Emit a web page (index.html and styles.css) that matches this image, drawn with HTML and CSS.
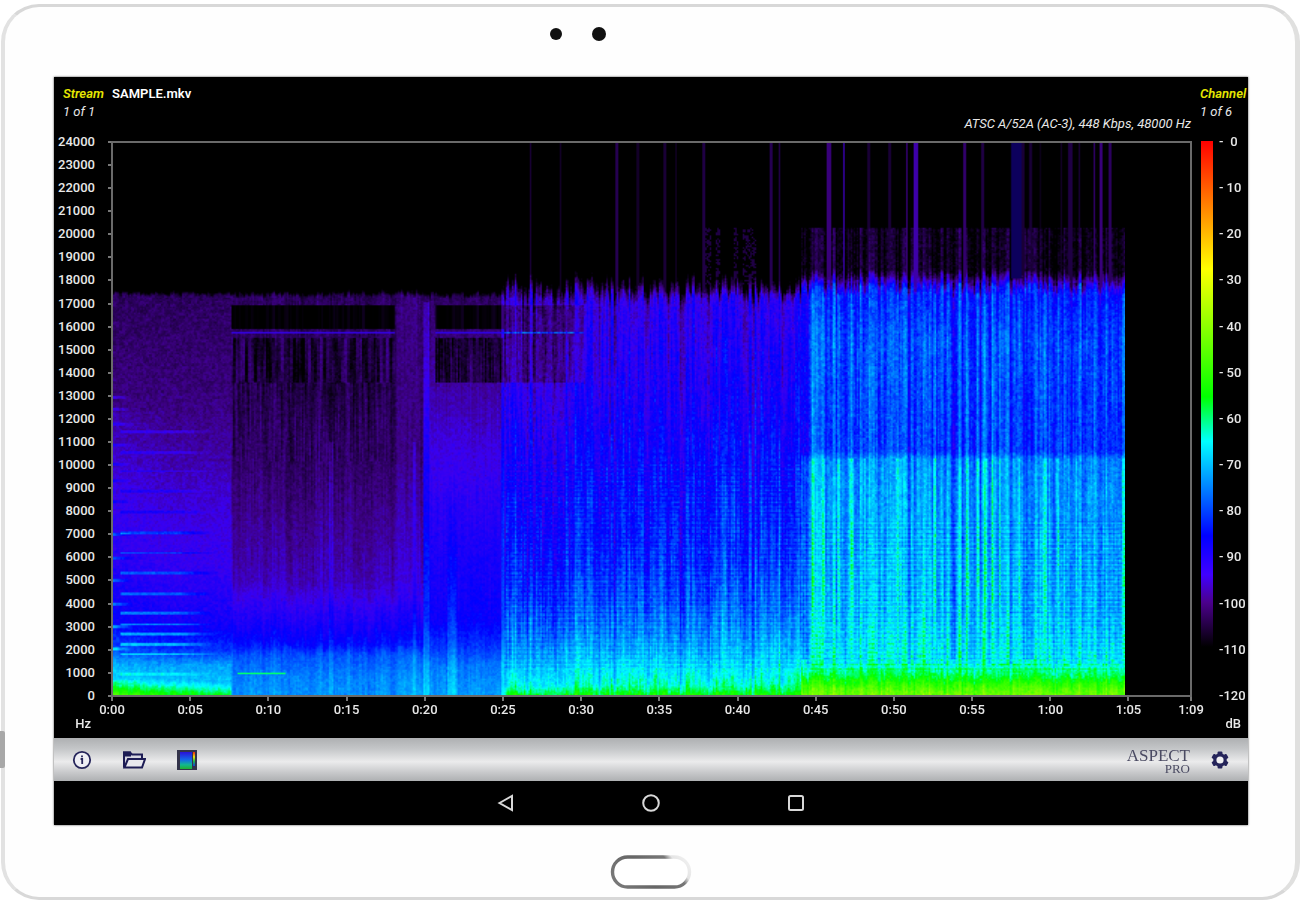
FILE: index.html
```html
<!DOCTYPE html>
<html lang="en">
<head>
  <meta charset="UTF-8" />
  <meta name="viewport" content="width=device-width, initial-scale=1.0"/>
  <title>Aspect Pro</title>
  <link rel="stylesheet" href="styles.css">
</head>
<body>
  <div class="side-button"></div>
  <div class="tablet">
    <div class="cameras">
      <span class="camera camera-small"></span>
      <span class="camera"></span>
    </div>

    <main class="screen">
      <section class="chart">
        <header class="chart-header">
          <div class="stream">
            <p><button class="label-btn">Stream</button> <span class="file-name">SAMPLE.mkv</span></p>
            <p class="count">1 of 1</p>
          </div>
          <p class="format">ATSC A/52A (AC-3), 448 Kbps, 48000 Hz</p>
          <div class="channel">
            <button class="label-btn">Channel</button>
            <p class="count">1 of 6</p>
          </div>
        </header>

        <ul class="freq-axis" id="freqAxis"></ul>
        <div class="plot">
          <canvas id="spectrogram" width="675" height="371"></canvas>
        </div>
        <div class="level-axis">
          <div class="level-bar"></div>
          <ul class="levels" id="levels"></ul>
        </div>

        <div class="unit">Hz</div>
        <ul class="time-axis" id="timeAxis"></ul>
        <div class="unit unit-db">dB</div>
      </section>

      <div class="toolbar">
        <button class="tool" aria-label="Info">
          <svg width="20" height="20" viewBox="0 0 20 20" fill="none" stroke="#25245a" stroke-width="1.8">
            <circle cx="10" cy="10" r="8.2" fill="#eeeef4"/>
            <path d="M8.6 9h1.6v5M10 5.4v1.8"/>
          </svg>
        </button>
        <button class="tool" aria-label="Open file">
          <svg width="24" height="20" viewBox="0 0 24 20" fill="none" stroke="#1d1c55" stroke-width="2">
            <path d="M2 17.5V2.5h6l2 2h10v4" fill="#d6d6e0"/>
            <path d="M2 2.5h6v3H2z" fill="#1d1c55"/>
            <path d="M2.4 17.5l3.6-8.5h17l-3 8.5z" fill="#e8e8ee"/>
          </svg>
        </button>
        <button class="tool" aria-label="Spectrogram">
          <svg width="22" height="22" viewBox="0 0 22 22">
            <defs>
              <linearGradient id="specIcon" x1="0" y1="0" x2="0" y2="1">
                <stop offset="0" stop-color="#2a10d8"/>
                <stop offset=".45" stop-color="#1466e8"/>
                <stop offset=".75" stop-color="#12b890"/>
                <stop offset="1" stop-color="#20b030"/>
              </linearGradient>
              <linearGradient id="barIcon" x1="0" y1="0" x2="0" y2="1">
                <stop offset="0" stop-color="#f02010"/>
                <stop offset=".35" stop-color="#f0e010"/>
                <stop offset=".65" stop-color="#20c040"/>
                <stop offset="1" stop-color="#1040e0"/>
              </linearGradient>
            </defs>
            <rect x="1" y="1" width="20" height="20" fill="#33334a"/>
            <rect x="4" y="3" width="12" height="17" fill="url(#specIcon)"/>
            <rect x="17" y="3" width="2" height="14" fill="url(#barIcon)"/>
          </svg>
        </button>
        <div class="brand">ASPECT<span>PRO</span></div>
        <button class="tool" aria-label="Settings">
          <svg width="20" height="20" viewBox="0 0 20 20">
            <g fill="#25245a">
              <rect x="7.6" y="1.4" width="4.8" height="17.2" rx="1"/>
              <rect x="7.6" y="1.4" width="4.8" height="17.2" rx="1" transform="rotate(60 10 10)"/>
              <rect x="7.6" y="1.4" width="4.8" height="17.2" rx="1" transform="rotate(120 10 10)"/>
              <circle cx="10" cy="10" r="6.8"/>
            </g>
            <circle cx="10" cy="10" r="3.6" fill="#f0f0f2"/>
          </svg>
        </button>
      </div>

      <nav class="nav">
        <button aria-label="Back">
          <svg width="20" height="20" viewBox="0 0 20 20"><path d="M3.5 10l12.500-7v14z"/></svg>
        </button>
        <button aria-label="Home">
          <svg width="20" height="20" viewBox="0 0 20 20"><circle cx="10" cy="10" r="7.800"/></svg>
        </button>
        <button aria-label="Recent apps">
          <svg width="20" height="20" viewBox="0 0 20 20"><rect x="3" y="3" width="14" height="14" rx="1.500"/></svg>
        </button>
      </nav>
    </main>

    <div class="home">
      <svg width="82" height="36" viewBox="0 0 82 36">
        <defs>
          <linearGradient id="homeEdge" x1="0" y1=".6" x2="1" y2=".3">
            <stop offset="0" stop-color="#777"/>
            <stop offset=".4" stop-color="#666"/>
            <stop offset=".78" stop-color="#777"/>
            <stop offset=".87" stop-color="#e4e4e4"/>
            <stop offset="1" stop-color="#eee"/>
          </linearGradient>
        </defs>
        <rect x="2.500" y="3" width="77" height="30" rx="15" fill="#fff" stroke="url(#homeEdge)" stroke-width="3.400"/>
      </svg>
    </div>
  </div>

  <script src="script.js"></script>
</body>
</html>
```

FILE: styles.css
```css
* {
  margin: 0;
  padding: 0;
  box-sizing: border-box;
  font-family: Roboto, 'Liberation Sans', sans-serif;
}

body {
  position: relative;
  min-height: 100vh;
  display: flex;
  background-color: #fff;
  color: #e8e8e8;
  font-size: 13px;
  line-height: 18px;
}

ul {
  list-style: none;
}

button {
  background: none;
  border: none;
  cursor: pointer;
}

.side-button {
  position: absolute;
  left: 0;
  top: 731px;
  width: 5px;
  height: 37px;
  background-color: #a8a8a8;
  border-radius: 0 2px 2px 0;
}

.tablet {
  flex: 1;
  display: flex;
  flex-direction: column;
  margin: 4px 2px 0 1px;
  padding: 0 47px 0 49px;
  background-color: #fefefe;
  border: 3px solid #d8d8d8;
  border-left: 4px solid #e2e2e2;
  border-right: 5px solid #e0e0df;
  border-radius: 38px;
}

.cameras {
  display: flex;
  justify-content: center;
  align-items: flex-start;
  gap: 30px;
  height: 70px;
  padding: 20px 147px 0 0;
}

.camera {
  width: 14px;
  height: 14px;
  border-radius: 50%;
  background-color: #111;
}

.camera-small {
  width: 12px;
  height: 12px;
  margin-top: 1px;
}

.screen {
  flex: 1;
  display: flex;
  flex-direction: column;
  background-color: #000;
  box-shadow: 0 0 2px #444;
}

.chart {
  flex: 1;
  display: grid;
  grid-template-columns: 57px 1fr 56px;
  grid-template-rows: 64px minmax(400px, 1fr) 41px;
}

.chart-header {
  grid-column: 1 / -1;
  display: flex;
  padding: 8px 0 0 9px;
}

.label-btn {
  margin-right: 5px;
  color: #e6e600;
  font-size: 13px;
  font-style: italic;
  font-weight: 600;
  line-height: 18px;
}

.file-name {
  color: #fff;
  font-weight: 600;
}

.count, .format {
  font-style: italic;
}

.format {
  margin-left: auto;
  padding-top: 30px;
}

.channel {
  width: 48px;
  margin-left: 9px;
}

.channel .label-btn {
  margin: 0;
}

.freq-axis, .levels {
  display: flex;
  flex-direction: column;
  justify-content: space-between;
  margin: -7px 0;
  font-weight: 500;
  line-height: 16px;
}

.freq-axis li {
  display: flex;
  justify-content: flex-end;
  align-items: center;
  gap: 13px;
}

.freq-axis li::after {
  content: "";
  width: 3px;
  height: 2px;
  background-color: #777;
}

.plot {
  border: 2px solid #6a6a6a;
}

.plot canvas {
  display: block;
  width: 94%;
  height: 0;
  min-height: 100%;
}

.level-axis {
  display: flex;
  padding-left: 9px;
}

.level-bar {
  width: 12px;
  margin-right: 6px;
  background: linear-gradient(#f00, #ff0 23%, #0f0 46%, #0ff 54%, #00f 71%, #4000ff 78%, #4b008c 83%, #000 91%);
}

.levels li {
  display: flex;
}

.levels span {
  width: 21px;
  text-align: center;
}

.time-axis {
  display: grid;
  grid-template-columns: repeat(13, minmax(0, 5fr)) minmax(0, 4fr) 0;
  padding: 0 1px;
  font-weight: 500;
  line-height: 18px;
}

.time-axis li {
  display: flex;
  flex-direction: column;
  align-items: center;
  width: 0;
}

.time-axis li::before {
  content: "";
  width: 2px;
  height: 4px;
  background-color: #777;
}

.unit {
  padding: 18px 20px 0 0;
  font-weight: 500;
  text-align: right;
}

.unit-db {
  padding-right: 7px;
}

.toolbar {
  display: flex;
  align-items: center;
  gap: 30px;
  height: 43px;
  padding: 0 18px;
  background: linear-gradient(#aeb0b2, #c4c6c8 25%, #ebebec 55%, #c8c9cb 80%, #aeb0b2);
}

.tool {
  display: flex;
}

.brand {
  margin-left: auto;
  margin-right: -10px;
  padding-top: 4px;
  color: #4a4a62;
  font-family: 'Liberation Serif', serif;
  font-size: 17px;
  line-height: 14px;
}

.brand span {
  display: block;
  font-family: inherit;
  font-size: 13px;
  line-height: 12px;
  text-align: right;
}

.nav {
  display: flex;
  justify-content: center;
  align-items: center;
  gap: 125px;
  height: 44px;
}

.nav button {
  display: flex;
}

.nav svg {
  fill: none;
  stroke: #d8d8d8;
  stroke-width: 2;
}

.home {
  display: flex;
  justify-content: center;
  height: 72px;
  padding-top: 29px;
}
```

FILE: script.js
```js
// axis labels
const freqAxis = document.getElementById('freqAxis');
for (let hz = 24000; hz >= 0; hz -= 1000) {
  freqAxis.innerHTML += `<li>${hz}</li>`;
}

const levels = document.getElementById('levels');
for (let db = 0; db <= 120; db += 10) {
  levels.innerHTML += `<li>-<span>${db}</span></li>`;
}

const timeAxis = document.getElementById('timeAxis');
const times = [];
for (let s = 0; s <= 65; s += 5) times.push(s);
times.push(69);
times.forEach(s => {
  timeAxis.innerHTML += `<li>${Math.floor(s / 60)}:${String(s % 60).padStart(2, '0')}</li>`;
});

// level -> color, same scale as the bar on the right
const colors = [
  [-120, 0, 0, 0], [-110, 0, 0, 0], [-100, 62, 0, 135], [-94, 60, 0, 240], [-86, 0, 0, 255],
  [-65, 0, 255, 255], [-56, 0, 255, 0], [-28, 255, 255, 0], [0, 255, 0, 0]
];

function colorFor(db) {
  db = Math.max(-120, Math.min(0, db));
  let i = 1;
  while (db > colors[i][0]) i++;
  const a = colors[i - 1], b = colors[i];
  const t = (db - a[0]) / (b[0] - a[0]);
  return [1, 2, 3].map(k => a[k] + (b[k] - a[k]) * t);
}

// repeatable noise, -1 to 1
function hash(x, y) {
  let h = Math.imul(x | 0, 374761393) + Math.imul(y | 0, 668265263);
  h = Math.imul(h ^ (h >>> 13), 1274126177);
  return ((h ^ (h >>> 16)) >>> 0) / 2147483648 - 1;
}

// noise stretched along y
function streak(x, y, size) {
  const n = Math.floor(y / size), t = y / size - n;
  return hash(x, n) * (1 - t) + hash(x, n + 1) * t;
}

function curve(points, y) {
  let i = 1;
  while (i < points.length - 1 && y > points[i][0]) i++;
  const a = points[i - 1], b = points[i];
  const t = Math.max(0, Math.min(1, (y - a[0]) / (b[0] - a[0])));
  return a[1] + (b[1] - a[1]) * t;
}

// [y, dB] on a 1012 x 556 grid
const parts = {
  intro: [[146, -118], [153, -103], [250, -101], [300, -99], [350, -96], [420, -93], [480, -89], [510, -82], [525, -73], [540, -70], [546, -64], [556, -53]],
  quiet: [[146, -118], [154, -103], [240, -103], [310, -103], [350, -101], [440, -97], [485, -89], [505, -85], [516, -79], [540, -75], [556, -74]],
  rise: [[146, -118], [154, -103], [240, -99], [300, -95], [400, -90], [480, -87], [510, -81], [525, -76], [556, -73]],
  middle: [[132, -120], [150, -102], [158, -95], [240, -92], [320, -88], [400, -85], [460, -81], [500, -75], [525, -70], [545, -65], [556, -56]],
  loud: [[126, -112], [138, -99], [150, -84], [200, -80], [310, -82], [318, -75], [400, -73], [470, -71], [520, -66], [535, -59], [550, -47], [556, -44]]
};

const harmonics = [290, 311, 330, 350, 371, 392, 412, 432, 453, 473, 484, 494, 504, 514, 534];
const attacks = [255, 268, 282, 303, 323, 340, 360, 394, 417, 440, 464, 486, 509];

// full height lines: x, width, dB
const clicks = [
  [417, 2, -106], [447, 2, -107], [503, 2, -104], [524, 2, -107], [551, 2, -106], [562, 2, -107], [590, 2, -105],
  [657, 3, -104], [666, 2, -105], [715, 4, -101], [730, 2, -97], [755, 2, -106], [776, 3, -106], [793, 2, -101],
  [802, 4, -98], [851, 3, -102], [869, 2, -105], [909, 3, -106], [917, 2, -106], [927, 2, -108], [948, 2, -107],
  [957, 4, -105], [966, 2, -106], [981, 2, -102], [987, 3, -101], [996, 3, -103]
];
const bright = [[699, 3], [710, 3], [725, 2], [738, 4], [751, 2], [785, 5], [821, 4], [854, 3], [865, 3], [872, 2], [879, 2], [886, 2], [906, 2], [931, 4], [944, 3], [963, 2], [1010, 4]];

function near(list, x) {
  return list.find(c => Math.abs(x - c[0]) <= c[1] / 2);
}

function levelAt(x, y, cx, cy) {
  const grain = hash(cx, cy + 900) * 0.6 + hash(cx >> 1, (cy >> 1) + 3000) * 0.6;
  const col = hash(cx, 7777) * 0.5 + hash(cx >> 1, 6666) * 0.7;
  const wide = hash(Math.floor(cx / 5), 4444);
  let db;

  if (x < 118) {
    db = curve(parts.intro, y + col * 2) + grain * 2.4;
    if (x < 60 && y > 270) db += (60 - x) / 30;
    if (y > 540) db += (60 - x) / 20;
    harmonics.forEach(h => {
      const d = Math.abs(y - h);
      if (d < 1.2 && x > 6 && x < 104) {
        db += Math.min(1, (104 - x) / 40) * (h > 380 && h < 530 ? 12 : 5);
      }
    });
    attacks.forEach(a => {
      if (Math.abs(y - a) < 1.5 && x < 20) db += (20 - x) / (a < 380 ? 3 : 1.6);
    });
  } else if (x < 310) {
    db = curve(parts.quiet, y + col * 3) + grain * 2 + streak(cx, y, 70) * 1.6 + wide * 1.2;
    if (x > 281) db += y < 450 ? 2 : 1;
    else {
      if (y > 163 && y < 186) db = -110 + col * 2;
      if (y > 195 && y < 241) db += streak(Math.floor(cx / 2), y, 45) * 6 - 3;
      if (y >= 241 && y < 320) db += streak(cx, y, 35) * 2.5 - Math.max(0, (300 - y) / 30);
      if (Math.abs(y - 190.5) < 1) db = -93;
      if (Math.abs(y - 534) < 1 && x > 124 && x < 172) db = -60;
    }
    if (((x > 299 && x < 302) || (x > 215 && x < 219)) && y > 300) db += 4;
  } else if (x < 391) {
    db = curve(parts.rise, y + col * 3) + grain * 2 + streak(cx, y, 90) * 1.4;
    if (x < 316 && y > 160) db += 5;
    if (x > 333 && x < 343 && y > 330) db += Math.min(5, (y - 330) / 30);
    if (x > 322) {
      if (y > 163 && y < 186) db = -109 + col * 2;
      if (y > 195 && y < 241) db += streak(cx, y, 45) * 5 - 6;
      if (Math.abs(y - 190.5) < 1) db = -92;
    }
    if (x > 388 && y > 140) db += 8;
  } else if (x < 688) {
    const grow = (x - 391) / 297;
    const swing = y > 500 ? 3 : 5;
    db = curve(parts.middle, y + (y < 170 ? col * 9 : 0)) + (y > 150 ? grow * 4 - 1 : 0);
    db += grain * 3 + col * swing + wide * 2;
    if (y > 150) db += streak(cx, y, 30) * 3;
    if (x < 470 && y > 163 && y < 241) db -= 5;
    if (y > 320 && y < 530) db += Math.sin(y * 1.5) * 1.8;
    if (Math.abs(y - 190.5) < 1 && x < 470) db = -80 + grain * 8;
    if (y < 142 && y > 84 && x > 590 && hash(Math.floor(cx / 3), 55) > 0.6 && grain > 0.1) db = Math.max(db, -105);
  } else {
    db = curve(parts.loud, y + (y < 165 ? col * 9 : 0));
    db += grain * 3.5 + wide * 2;
    if (y > 140) db += col * (y > 525 ? 2.5 : 5) + streak(cx, y, 50) * 2.5;
    if (y > 380 && y < 530) db += Math.sin(y * 1.5) * 2.5;
    if (near(bright, x) && y > 150 && y < 530) db += (y > 317 ? 9 : 4) * Math.min(1, (530 - y) / 90);
    if ((x < 693 || (x > 838 && x < 843) || (x > 909 && x < 922)) && y > 150 && y < 520) db -= 5;
    if (y > 84 && y < 140) db = Math.max(db, -108 + col * 4 + wide * 2 + grain * 2.5);
    if (x > 897 && x < 908 && y < 136) return -1;
  }

  if (y <= 84 || (x < 590 && y < 126)) db = -120;
  const click = near(clicks, x);
  if (click && y < 150) db = Math.max(db, click[2]);
  return db;
}

function drawSpectrogram() {
  const canvas = document.getElementById('spectrogram');
  const ctx = canvas.getContext('2d');
  const w = canvas.width, h = canvas.height;
  const image = ctx.createImageData(w, h);

  for (let cy = 0; cy < h; cy++) {
    for (let cx = 0; cx < w; cx++) {
      const db = levelAt(cx * 1012 / w, cy * 556 / h, cx, cy);
      // -1 marks the dark blue block before 1:00
      const rgb = db === -1 ? [12, 0, 92] : colorFor(db);
      const i = (cy * w + cx) * 4;
      image.data[i] = rgb[0];
      image.data[i + 1] = rgb[1];
      image.data[i + 2] = rgb[2];
      image.data[i + 3] = 255;
    }
  }
  ctx.putImageData(image, 0, 0);
}

drawSpectrogram();
```
